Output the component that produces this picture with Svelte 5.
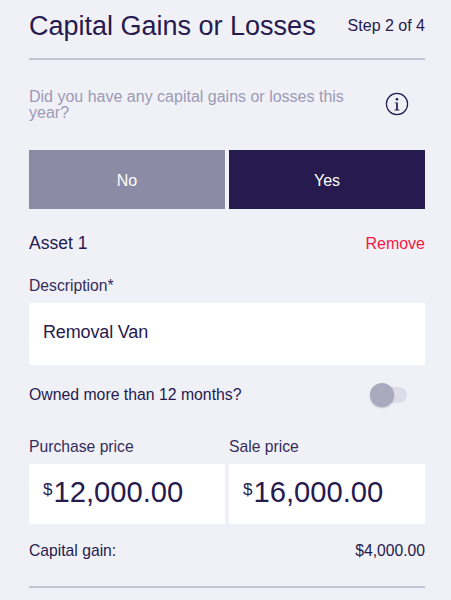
<script>
  const prices = [
    { label: 'Purchase price', value: '12,000.00' },
    { label: 'Sale price', value: '16,000.00' }
  ];
</script>

<main class="page">
  <header class="head">
    <h1>Capital Gains or Losses</h1>
    <span class="step">Step 2 of 4</span>
  </header>

  <div class="question">
    <p>Did you have any capital gains or losses this year?</p>
    <svg class="info" width="24" height="24" viewBox="0 0 24 24" aria-hidden="true">
      <circle cx="12" cy="12" r="10.6" fill="none" stroke="#261a4f" stroke-width="1.2" />
      <circle cx="12" cy="7.2" r="1.3" fill="#261a4f" />
      <path d="M9.8 10.4h3v7.2h1.5v.9H9.6v-.9h1.5v-6.3H9.8z" fill="#261a4f" />
    </svg>
  </div>

  <div class="choice">
    <button class="no">No</button>
    <button class="yes">Yes</button>
  </div>

  <div class="asset">
    <h2>Asset 1</h2>
    <span class="remove">Remove</span>
  </div>

  <div class="label">Description*</div>
  <div class="field desc">Removal Van</div>

  <div class="owned">
    <span>Owned more than 12 months?</span>
    <span class="toggle"><span class="knob"></span></span>
  </div>

  <div class="prices">
    {#each prices as p}
      <div class="price">
        <div class="label">{p.label}</div>
        <div class="field amount"><sup>$</sup>{p.value}</div>
      </div>
    {/each}
  </div>

  <div class="gain">
    <span>Capital gain:</span>
    <span>$4,000.00</span>
  </div>
  <div class="rule"></div>
</main>

<style>
  :global(body) {
    margin: 0;
    background: #f0f1f7;
  }
  .page {
    box-sizing: border-box;
    width: 451px;
    height: 600px;
    overflow: hidden;
    padding: 0 26px 0 29px;
    font-family: "Liberation Sans", Arial, sans-serif;
    color: #261a4f;
    background: #f0f1f7;
  }
  .head {
    display: flex;
    justify-content: space-between;
    align-items: center;
    height: 52px;
    border-bottom: 2px solid #c3c3d5;
    padding-bottom: 6px;
  }
  h1 {
    margin: 0;
    font-size: 27px;
    font-weight: 400;
    padding-top: 1px;
  }
  .step {
    font-size: 16px;
  }
  .question {
    display: flex;
    justify-content: space-between;
    align-items: center;
    margin-top: 29px;
    height: 32px;
  }
  .question p {
    margin: 0;
    width: 325px;
    font-size: 16px;
    line-height: 16px;
    color: #9c9ab5;
  }
  .info {
    margin-right: 16px;
    margin-top: -2px;
    flex: none;
  }
  .choice {
    display: grid;
    grid-template-columns: 196px 196px;
    gap: 4px;
    margin-top: 29px;
  }
  .choice button {
    height: 59px;
    border: 0;
    padding: 2px 0 0;
    color: #fff;
    font: 400 16px "Liberation Sans", Arial, sans-serif;
  }
  .no {
    background: #8d8aa6;
  }
  .yes {
    background: #261a4f;
  }
  .asset {
    display: flex;
    justify-content: space-between;
    align-items: center;
    margin-top: 24px;
    height: 20px;
  }
  h2 {
    margin: 0;
    font-size: 17.5px;
    font-weight: 400;
  }
  .remove {
    font-size: 16px;
    color: #f5193f;
    padding-top: 1px;
  }
  .label {
    font-size: 15.7px;
    line-height: 18px;
    color: #352c5c;
  }
  .asset + .label {
    margin-top: 24px;
  }
  .field {
    background: #fff;
    box-sizing: border-box;
    display: flex;
    align-items: center;
    padding-left: 14px;
  }
  .desc {
    height: 62px;
    margin-top: 8px;
    padding-bottom: 4px;
    font-size: 18px;
    letter-spacing: -0.15px;
  }
  .owned {
    display: flex;
    justify-content: space-between;
    align-items: center;
    margin-top: 20px;
    height: 20px;
    font-size: 15.8px;
  }
  .toggle {
    position: relative;
    width: 37px;
    height: 16px;
    border-radius: 8px;
    background: #dcdde8;
    margin-right: 18px;
  }
  .knob {
    position: absolute;
    left: 0;
    top: -4px;
    width: 24px;
    height: 24px;
    border-radius: 50%;
    background: #aaaabf;
    box-shadow: 0 1px 2px rgba(0, 0, 0, 0.2);
  }
  .prices {
    display: grid;
    grid-template-columns: 196px 196px;
    gap: 4px;
    margin-top: 33px;
  }
  .amount {
    height: 60px;
    margin-top: 8px;
    padding-bottom: 3px;
    font-size: 29.2px;
  }
  .amount sup {
    font-size: 17px;
    line-height: 1;
    align-self: flex-start;
    margin-top: 17px;
    margin-right: 1px;
  }
  .gain {
    display: flex;
    justify-content: space-between;
    align-items: center;
    margin-top: 18px;
    height: 18px;
    font-size: 15.7px;
  }
  .rule {
    height: 2px;
    background: #c3c3d5;
    margin-top: 26px;
  }
</style>
